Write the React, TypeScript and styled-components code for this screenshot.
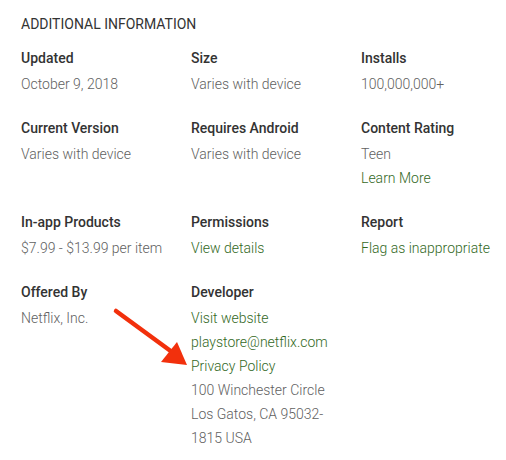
import React from 'react';
import styled, { createGlobalStyle } from 'styled-components';

const GlobalStyle = createGlobalStyle`
  html, body {
    margin: 0;
    padding: 0;
    background: #fff;
    font-family: Roboto, "Liberation Sans", Arial, sans-serif;
  }
`;

const Page = styled.div`
  position: relative;
  width: 506px;
  height: 460px;
  padding: 12px 0 0 21px;
  box-sizing: border-box;
  overflow: hidden;
`;

const Title = styled.h2`
  margin: 0 0 10px;
  font-size: 14px;
  font-weight: 400;
  line-height: 24px;
  color: #333;
  text-transform: uppercase;
`;

const Grid = styled.div`
  display: grid;
  grid-template-columns: repeat(3, 170px);
  row-gap: 20px;
`;

const Cell = styled.div`
  display: flex;
  flex-direction: column;
`;

const Label = styled.div`
  font-size: 14px;
  font-weight: 500;
  line-height: 24px;
  color: #333;
  margin-bottom: 2px;
`;

const Value = styled.span<{ $link?: boolean }>`
  font-size: 14px;
  font-weight: 300;
  line-height: 24px;
  color: ${({ $link }) => ($link ? '#33691e' : '#616161')};
`;

const Arrow = styled.svg`
  position: absolute;
  left: 0;
  top: 0;
  pointer-events: none;
`;

type Line = { text: string; link?: boolean };
type Info = { label: string; lines: Line[] };

const items: Info[] = [
  { label: 'Updated', lines: [{ text: 'October 9, 2018' }] },
  { label: 'Size', lines: [{ text: 'Varies with device' }] },
  { label: 'Installs', lines: [{ text: '100,000,000+' }] },
  { label: 'Current Version', lines: [{ text: 'Varies with device' }] },
  { label: 'Requires Android', lines: [{ text: 'Varies with device' }] },
  {
    label: 'Content Rating',
    lines: [{ text: 'Teen' }, { text: 'Learn More', link: true }],
  },
  { label: 'In-app Products', lines: [{ text: '$7.99 - $13.99 per item' }] },
  { label: 'Permissions', lines: [{ text: 'View details', link: true }] },
  { label: 'Report', lines: [{ text: 'Flag as inappropriate', link: true }] },
  { label: 'Offered By', lines: [{ text: 'Netflix, Inc.' }] },
  {
    label: 'Developer',
    lines: [
      { text: 'Visit website', link: true },
      { text: 'playstore@netflix.com', link: true },
      { text: 'Privacy Policy', link: true },
      { text: '100 Winchester Circle' },
      { text: 'Los Gatos, CA 95032-' },
      { text: '1815 USA' },
    ],
  },
];

export default function App() {
  return (
    <>
      <GlobalStyle />
      <Page>
        <Title>Additional Information</Title>
        <Grid>
          {items.map((item) => (
            <Cell key={item.label}>
              <Label>{item.label}</Label>
              {item.lines.map((line) => (
                <Value key={line.text} $link={line.link}>
                  {line.text}
                </Value>
              ))}
            </Cell>
          ))}
        </Grid>
        <Arrow width="506" height="460" viewBox="0 0 506 460">
          <line
            x1="116"
            y1="311"
            x2="172"
            y2="352"
            stroke="#f2300c"
            strokeWidth="4.5"
            strokeLinecap="round"
          />
          <polygon points="187,365 177,342 161,362" fill="#f2300c" />
        </Arrow>
      </Page>
    </>
  );
}
